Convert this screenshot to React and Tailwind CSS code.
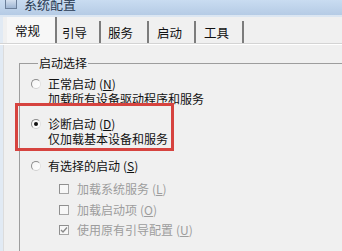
import React from "react";

const font = { fontFamily: '"Noto Sans CJK SC", "Noto Sans", sans-serif' };

function Radio({ checked }) {
  return (
    <span className="mt-[3px] flex h-[10px] w-[10px] shrink-0 items-center justify-center rounded-full border border-[#8e8e8e] border-r-[#e2e2e2] border-b-[#d0d0d0] bg-gradient-to-br from-[#f4f4f4] to-white">
      {checked && <span className="h-[4px] w-[4px] rounded-full bg-[#111]" />}
    </span>
  );
}

function Check({ checked }) {
  return (
    <span className="flex h-[10px] w-[10px] shrink-0 items-center justify-center border border-[#a6a6a6] border-t-[#8f8f8f] border-l-[#8f8f8f] bg-[#f7f7f7]">
      {checked && (
        <svg width="8" height="8" viewBox="0 0 8 8">
          <path d="M1 4 L3 6 L7 1.5" fill="none" stroke="#8a8a8a" strokeWidth="1.4" />
        </svg>
      )}
    </span>
  );
}

function Key({ k }) {
  return (
    <span className="ml-[3px]">
      (<span className="underline">{k}</span>)
    </span>
  );
}

const tabs = [
  { label: "引导", w: "w-[44px]", pl: "pl-[5px]" },
  { label: "服务", w: "w-[48px]", pl: "pl-[7px]" },
  { label: "启动", w: "w-[47px]", pl: "pl-[8px]" },
  { label: "工具", w: "w-[48px]", pl: "pl-[8px]" },
];

const boxes = [
  { label: "加载系统服务", k: "L", mt: "mt-[8px]" },
  { label: "加载启动项", k: "O", mt: "mt-[6px]" },
  { label: "使用原有引导配置", k: "U", mt: "mt-[5px]", checked: true },
];

export default function App() {
  return (
    <div
      className="relative h-[251px] w-[342px] overflow-hidden bg-[#f0f0f0] text-[12px] leading-[15px] text-[#111]"
      style={font}
    >
      {/* title bar */}
      <div className="flex h-[15px] items-start overflow-hidden bg-gradient-to-b from-[#c9dcf1] to-[#b5cbe5] pl-[5px]">
        <span className="mt-[-4px] h-[13px] w-[12px] border border-[#6b7f9a] bg-gradient-to-b from-[#e8f0fa] to-[#9fb6d3]" />
        <span className="ml-[7px] mt-[-3px] text-[13px] leading-[14px] text-[#2a3a52]">系统配置</span>
      </div>

      <div className="h-[2px] bg-[#dbe6f2]" />

      {/* tabs */}
      <div className="flex h-[26px] items-end border-l-[3px] border-[#e1eaf4] pl-[4px]">
        <div className="flex h-[26px] w-[50px] items-center border-r-2 border-[#7c7c7c] bg-[#f7f7f7] pl-[8px] text-[12.5px]">
          常规
        </div>
        {tabs.map((t) => (
          <div
            key={t.label}
            className={`flex h-[22px] items-center border-r-2 border-[#7c7c7c] ${t.w} ${t.pl} text-[12.5px]`}
          >
            {t.label}
          </div>
        ))}
      </div>
      <div className="h-px bg-[#d4d4d4]" />
      <div className="h-px bg-white" />

      {/* panel */}
      <div className="flex h-full border-l-[3px] border-[#e1eaf4]">
        <div className="h-full w-px bg-[#dcdcdc]" />
        <fieldset className="ml-[15px] mt-[11px] flex-1 border-l border-t border-[#9d9d9d] pl-[11px] pt-[6px]">
          <legend className="ml-[7px] px-[1px] leading-[14px]">启动选择</legend>

          <div className="flex gap-[7px]">
            <Radio />
            <div>
              <div>
                正常启动
                <Key k="N" />
              </div>
              <div>加载所有设备驱动程序和服务</div>
            </div>
          </div>

          <div className="relative mt-[10px] flex gap-[7px]">
            <span className="absolute left-[-16px] top-[-13px] h-[48px] w-[159px] border-[3px] border-[#d6433f]" />
            <Radio checked />
            <div>
              <div>
                诊断启动
                <Key k="D" />
              </div>
              <div>仅加载基本设备和服务</div>
            </div>
          </div>

          <div className="mt-[12px] flex gap-[7px]">
            <Radio />
            <div>
              有选择的启动
              <Key k="S" />
            </div>
          </div>

          {boxes.map((b) => (
            <div key={b.label} className={`${b.mt} ml-[28px] flex items-center gap-[8px] text-[#9d9d9d]`}>
              <Check checked={b.checked} />
              <span>
                {b.label}
                <Key k={b.k} />
              </span>
            </div>
          ))}
        </fieldset>
      </div>
    </div>
  );
}
